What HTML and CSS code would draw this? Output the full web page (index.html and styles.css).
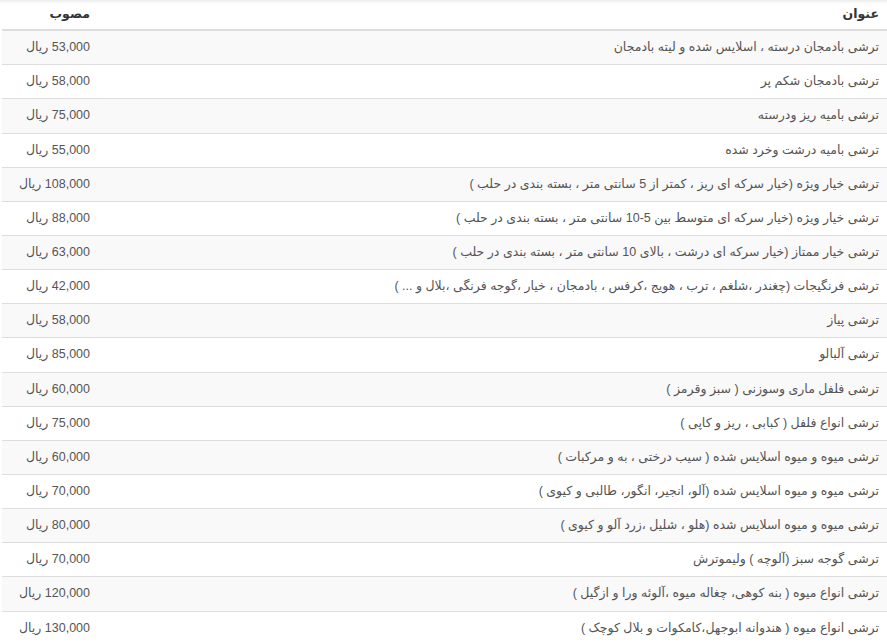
FILE: index.html
```html
<!DOCTYPE html>
<html lang="fa" dir="rtl">
<head>
<meta charset="utf-8">
<title>قیمت ترشی</title>
<link rel="stylesheet" href="styles.css">
</head>
<body>
<div class="top-shadow"></div>
<table class="price-table">
  <thead>
    <tr><th class="col-title">عنوان</th><th class="col-price">مصوب</th></tr>
  </thead>
  <tbody>
    <tr><td>ترشی بادمجان درسته ، اسلایس شده و لیته بادمجان</td><td>53,000 ریال</td></tr>
    <tr><td>ترشی بادمجان شکم پر</td><td>58,000 ریال</td></tr>
    <tr><td>ترشی بامیه ریز ودرسته</td><td>75,000 ریال</td></tr>
    <tr><td>ترشی بامیه درشت وخرد شده</td><td>55,000 ریال</td></tr>
    <tr><td>ترشی خیار ویژه (خیار سرکه ای ریز ، کمتر از 5 سانتی متر ، بسته بندی در حلب )</td><td>108,000 ریال</td></tr>
    <tr><td>ترشی خیار ویژه (خیار سرکه ای متوسط بین 5-10 سانتی متر ، بسته بندی در حلب )</td><td>88,000 ریال</td></tr>
    <tr><td>ترشی خیار ممتاز (خیار سرکه ای درشت ، بالای 10 سانتی متر ، بسته بندی در حلب )</td><td>63,000 ریال</td></tr>
    <tr><td>ترشی فرنگیجات (چغندر ،شلغم ، ترب ، هویج ،کرفس ، بادمجان ، خیار ،گوجه فرنگی ،بلال و ... )</td><td>42,000 ریال</td></tr>
    <tr><td>ترشی پیاز</td><td>58,000 ریال</td></tr>
    <tr><td>ترشی آلبالو</td><td>85,000 ریال</td></tr>
    <tr><td>ترشی فلفل ماری وسوزنی ( سبز وقرمز )</td><td>60,000 ریال</td></tr>
    <tr><td>ترشی انواع فلفل ( کبابی ، ریز و کاپی )</td><td>75,000 ریال</td></tr>
    <tr><td>ترشی میوه و میوه اسلایس شده ( سیب درختی ، به و مرکبات )</td><td>60,000 ریال</td></tr>
    <tr><td>ترشی میوه و میوه اسلایس شده (آلو، انجیر، انگور، طالبی و کیوی )</td><td>70,000 ریال</td></tr>
    <tr><td>ترشی میوه و میوه اسلایس شده (هلو ، شلیل ،زرد آلو و کیوی )</td><td>80,000 ریال</td></tr>
    <tr><td>ترشی گوجه سبز (آلوچه ) ولیموترش</td><td>70,000 ریال</td></tr>
    <tr><td>ترشی انواع میوه ( بنه کوهی، چغاله میوه ،آلوئه ورا و ازگیل )</td><td>120,000 ریال</td></tr>
    <tr><td>ترشی انواع میوه ( هندوانه ابوجهل،کامکوات و بلال کوچک )</td><td>130,000 ریال</td></tr>
  </tbody>
</table>
</body>
</html>
```

FILE: styles.css
```css
html, body {
  margin: 0;
  padding: 0;
  background: #fff;
}
body {
  font-family: "Liberation Sans", "DejaVu Sans", sans-serif;
  font-size: 12.5px;
  color: #555;
  overflow: hidden;
}
.top-shadow {
  position: fixed;
  top: 0;
  left: 0;
  right: 0;
  height: 4px;
  background: linear-gradient(to bottom, rgba(0,0,0,0.07), rgba(0,0,0,0));
  pointer-events: none;
}
.price-table {
  width: 885px;
  margin: 0;
  border-collapse: collapse;
  border-spacing: 0;
  direction: rtl;
  table-layout: fixed;
}
.price-table th,
.price-table td {
  text-align: right;
  padding: 8px 8px;
  line-height: 17.14px;
  white-space: nowrap;
}
.price-table th {
  padding: 6px 8px 6px;
  font-weight: bold;
  color: #333;
  border-bottom: 2px solid #ddd;
}
.price-table td {
  border-top: 1px solid #ddd;
}
.price-table tbody tr:first-child td {
  border-top: none;
}
.price-table tbody tr:nth-child(odd) td {
  background: #f9f9f9;
}
.col-price {
  width: 80px;
}
```
